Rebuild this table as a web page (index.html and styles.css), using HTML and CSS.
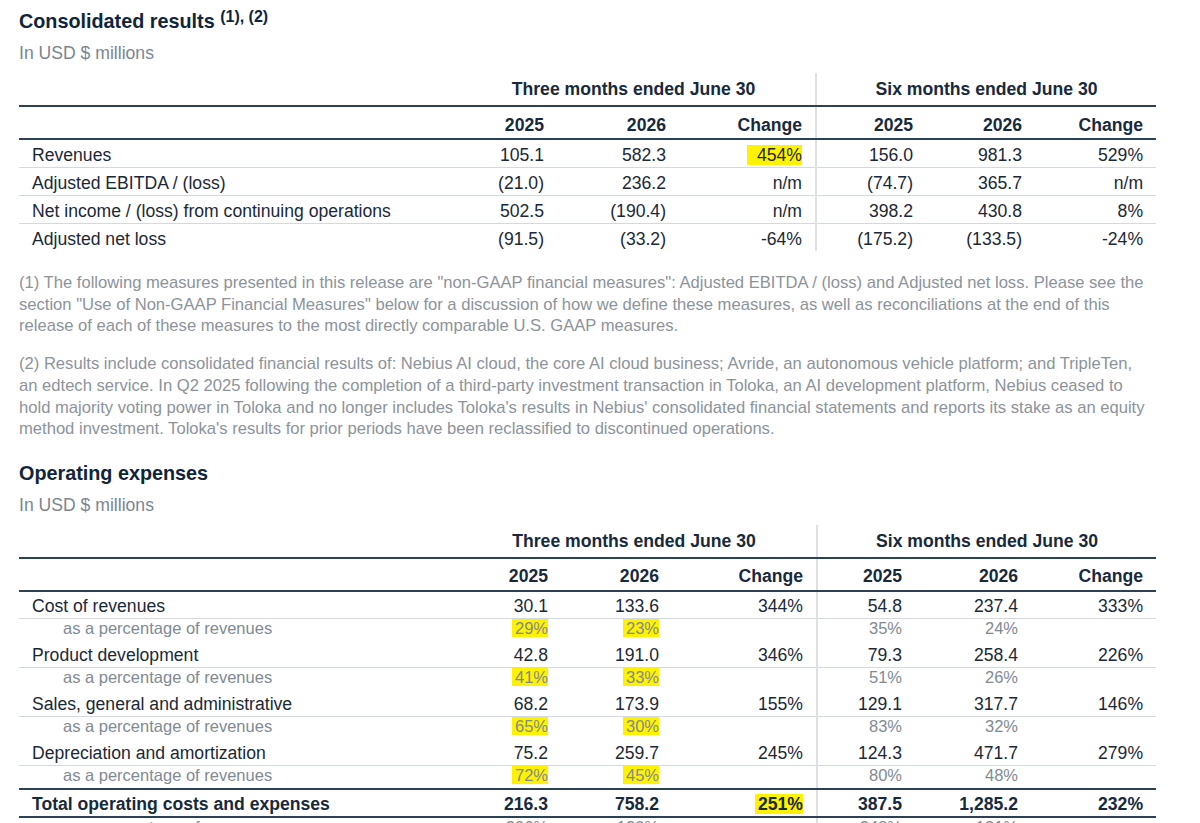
FILE: index.html
```html
<!DOCTYPE html>
<html lang="en">
<head>
<meta charset="utf-8">
<title>Consolidated results</title>
<link rel="stylesheet" href="styles.css">
</head>
<body>
<main class="page">
  <section class="block">
    <h2 class="title">Consolidated results <sup class="note">(1), (2)</sup></h2>
    <p class="unit">In USD $ millions</p>
    <table class="fin fin-a">
      <colgroup>
        <col class="c-label"><col class="a1"><col class="a2"><col class="a3"><col class="a4"><col class="a5"><col class="a6">
      </colgroup>
      <thead>
        <tr class="grp"><th class="lbl"></th><th colspan="3">Three months ended June 30</th><th colspan="3" class="sep">Six months ended June 30</th></tr>
        <tr class="yrs"><th class="lbl"></th><th>2025</th><th>2026</th><th>Change</th><th class="sep">2025</th><th>2026</th><th>Change</th></tr>
      </thead>
      <tbody>
        <tr><td class="lbl">Revenues</td><td>105.1</td><td>582.3</td><td><span class="hl hl-wide">454%</span></td><td class="sep">156.0</td><td>981.3</td><td>529%</td></tr>
        <tr><td class="lbl">Adjusted EBITDA / (loss)</td><td>(21.0)</td><td>236.2</td><td>n/m</td><td class="sep">(74.7)</td><td>365.7</td><td>n/m</td></tr>
        <tr><td class="lbl">Net income / (loss) from continuing operations</td><td>502.5</td><td>(190.4)</td><td>n/m</td><td class="sep">398.2</td><td>430.8</td><td>8%</td></tr>
        <tr><td class="lbl">Adjusted net loss</td><td>(91.5)</td><td>(33.2)</td><td>-64%</td><td class="sep">(175.2)</td><td>(133.5)</td><td>-24%</td></tr>
      </tbody>
    </table>
    <div class="notes">
      <p>(1) The following measures presented in this release are "non-GAAP financial measures": Adjusted EBITDA / (loss) and Adjusted net loss. Please see the section "Use of Non-GAAP Financial Measures" below for a discussion of how we define these measures, as well as reconciliations at the end of this release of each of these measures to the most directly comparable U.S. GAAP measures.</p>
      <p>(2) Results include consolidated financial results of: Nebius AI cloud, the core AI cloud business; Avride, an autonomous vehicle platform; and TripleTen, an edtech service. In Q2 2025 following the completion of a third-party investment transaction in Toloka, an AI development platform, Nebius ceased to hold majority voting power in Toloka and no longer includes Toloka's results in Nebius' consolidated financial statements and reports its stake as an equity method investment. Toloka's results for prior periods have been reclassified to discontinued operations.</p>
    </div>
  </section>

  <section class="block block-op">
    <h2 class="title">Operating expenses</h2>
    <p class="unit">In USD $ millions</p>
    <table class="fin fin-b">
      <colgroup>
        <col class="c-label"><col class="b1"><col class="b2"><col class="b3"><col class="b4"><col class="b5"><col class="b6">
      </colgroup>
      <thead>
        <tr class="grp"><th class="lbl"></th><th colspan="3">Three months ended June 30</th><th colspan="3" class="sep">Six months ended June 30</th></tr>
        <tr class="yrs"><th class="lbl"></th><th>2025</th><th>2026</th><th>Change</th><th class="sep">2025</th><th>2026</th><th>Change</th></tr>
      </thead>
      <tbody>
        <tr class="main"><td class="lbl">Cost of revenues</td><td>30.1</td><td>133.6</td><td>344%</td><td class="sep">54.8</td><td>237.4</td><td>333%</td></tr>
        <tr class="sub"><td class="lbl">as a percentage of revenues</td><td><span class="hl">29%</span></td><td><span class="hl">23%</span></td><td></td><td class="sep">35%</td><td>24%</td><td></td></tr>
        <tr class="main"><td class="lbl">Product development</td><td>42.8</td><td>191.0</td><td>346%</td><td class="sep">79.3</td><td>258.4</td><td>226%</td></tr>
        <tr class="sub"><td class="lbl">as a percentage of revenues</td><td><span class="hl">41%</span></td><td><span class="hl">33%</span></td><td></td><td class="sep">51%</td><td>26%</td><td></td></tr>
        <tr class="main"><td class="lbl">Sales, general and administrative</td><td>68.2</td><td>173.9</td><td>155%</td><td class="sep">129.1</td><td>317.7</td><td>146%</td></tr>
        <tr class="sub"><td class="lbl">as a percentage of revenues</td><td><span class="hl">65%</span></td><td><span class="hl">30%</span></td><td></td><td class="sep">83%</td><td>32%</td><td></td></tr>
        <tr class="main"><td class="lbl">Depreciation and amortization</td><td>75.2</td><td>259.7</td><td>245%</td><td class="sep">124.3</td><td>471.7</td><td>279%</td></tr>
        <tr class="sub sub-last"><td class="lbl">as a percentage of revenues</td><td><span class="hl">72%</span></td><td><span class="hl">45%</span></td><td></td><td class="sep">80%</td><td>48%</td><td></td></tr>
        <tr class="total"><td class="lbl">Total operating costs and expenses</td><td>216.3</td><td>758.2</td><td><span class="hl">251%</span></td><td class="sep">387.5</td><td>1,285.2</td><td>232%</td></tr>
        <tr class="sub"><td class="lbl">as a percentage of revenues</td><td>206%</td><td>130%</td><td></td><td class="sep">248%</td><td>131%</td><td></td></tr>
      </tbody>
    </table>
  </section>
</main>
</body>
</html>
```

FILE: styles.css
```css
* {
  box-sizing: border-box;
}

html,
body {
  margin: 0;
  padding: 0;
  background: #ffffff;
  overflow: hidden;
}

body {
  font-family: "Liberation Sans", Arial, sans-serif;
  color: #1b2836;
}

.page {
  width: 1200px;
  padding: 9px 0 0 19px;
}

.title {
  margin: 0;
  font-size: 19.8px;
  line-height: 24px;
  font-weight: 700;
  color: #10243a;
}

.note {
  font-size: 16px;
  line-height: 0;
  vertical-align: 6px;
}

.unit {
  margin: 10px 0 0;
  font-size: 17.6px;
  line-height: 20px;
  color: #7b858f;
}

.fin {
  margin-top: 10px;
  width: 1137px;
  border-collapse: collapse;
  table-layout: fixed;
  font-size: 17.6px;
  line-height: 20px;
  color: #1b2836;
}

.c-label { width: 433px; }
.a1 { width: 105px; }
.a2 { width: 122px; }
.a3 { width: 137px; }
.a4 { width: 110px; }
.a5 { width: 109px; }
.a6 { width: 121px; }

.b1 { width: 109px; }
.b2 { width: 111px; }
.b3 { width: 145px; }
.b4 { width: 98px; }
.b5 { width: 116px; }
.b6 { width: 125px; }

.fin th,
.fin td {
  padding: 5px 13px 2px;
  text-align: right;
  white-space: nowrap;
  font-weight: 400;
}

.fin th {
  font-weight: 700;
  color: #17293b;
}

.fin .lbl {
  text-align: left;
}

.fin .sep {
  border-left: 2px solid #dde1e6;
}

.fin .grp th {
  padding: 6px 13px 6px;
  text-align: center;
  border-bottom: 2px solid #2d4155;
}

.fin .grp th.lbl {
  text-align: left;
}

.fin .yrs th {
  padding: 8px 13px 3px;
  border-bottom: 2px solid #2d4155;
}

.fin-b .yrs th {
  padding: 7px 13px 4px;
}

.fin-a tbody td {
  border-bottom: 1px solid #d3d9e0;
}

.fin-a tbody tr:last-child td {
  border-bottom: none;
}

.fin-b .main td {
  padding: 4px 13px 2px;
  border-bottom: 1px solid #d3d9e0;
}

.fin-b .sub td {
  padding: 0 13px 4px;
  font-size: 16.5px;
  line-height: 18px;
  color: #818a93;
}

.fin-b .sub td.lbl {
  padding-left: 44px;
}

.fin-b .sub-last td {
  border-bottom: 2px solid #2d4155;
}

.fin-b .total td {
  padding: 4px 13px 2px;
  font-weight: 700;
  color: #17293b;
  border-bottom: 2px solid #2d4155;
}

.hl {
  background: #fff200;
  padding: 0 0 0 3px;
}

.hl-wide {
  padding-left: 10px;
}

.notes {
  width: 1128px;
  margin-top: 21px;
  font-size: 16.6px;
  line-height: 21.7px;
  color: #8c939a;
}

.notes p {
  margin: 0;
}

.notes p + p {
  margin-top: 16px;
}

.block-op {
  margin-top: 21px;
}
```
